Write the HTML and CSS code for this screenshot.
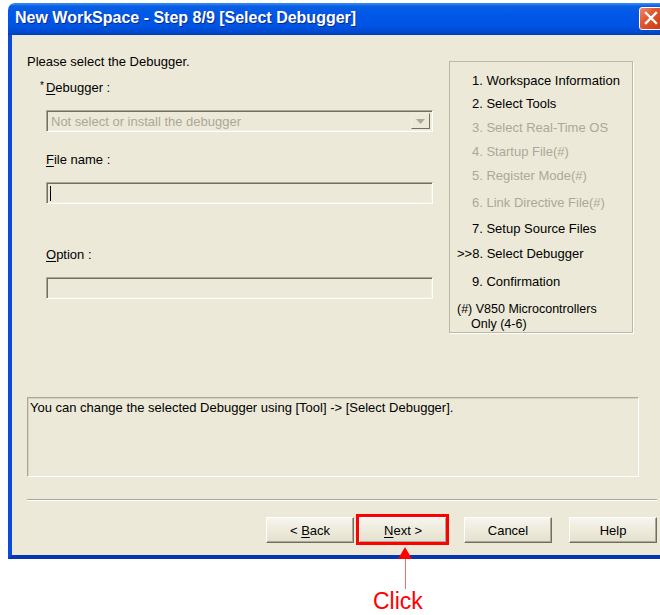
FILE: index.html
```html
<!DOCTYPE html>
<html lang="en">
<head>
<meta charset="utf-8">
<title>New WorkSpace - Step 8/9 [Select Debugger]</title>
<link rel="stylesheet" href="styles.css">
</head>
<body>
<div class="window">
  <div class="titlebar">
    <span class="title">New WorkSpace - Step 8/9 [Select Debugger]</span>
    <span class="close" aria-label="Close">
      <svg width="14" height="14" viewBox="0 0 14 14"><path d="M2 2 L12 12 M12 2 L2 12" stroke="#fff" stroke-width="2.4" stroke-linecap="square"/></svg>
    </span>
  </div>
  <div class="client">
    <div class="top">
      <div class="form">
        <p class="intro">Please select the Debugger.</p>
        <div class="label label-req"><span class="star">*</span><u>D</u>ebugger :</div>
        <div class="combo">
          <span class="combo-text">Not select or install the debugger</span>
          <span class="drop"><svg width="9" height="5" viewBox="0 0 9 5"><path d="M0 0 H9 L4.5 5 Z" fill="#ACA899"/></svg></span>
        </div>
        <div class="label label-file"><u>F</u>ile name :</div>
        <div class="field field-file"><span class="caret"></span></div>
        <div class="label label-opt"><u>O</u>ption :</div>
        <div class="field field-opt"></div>
      </div>
      <ul class="steps">
        <li class="step">1. Workspace Information</li>
        <li class="step">2. Select Tools</li>
        <li class="step off">3. Select Real-Time OS</li>
        <li class="step off">4. Startup File(#)</li>
        <li class="step off">5. Register Mode(#)</li>
        <li class="step off">6. Link Directive File(#)</li>
        <li class="step">7. Setup Source Files</li>
        <li class="step current">&gt;&gt;8. Select Debugger</li>
        <li class="step">9. Confirmation</li>
        <li class="note-steps">(#) V850 Microcontrollers<br><span class="indent">Only (4-6)</span></li>
      </ul>
    </div>
    <div class="hint">You can change the selected Debugger using [Tool] -&gt; [Select Debugger].</div>
    <div class="separator"></div>
    <div class="buttons">
      <button class="btn btn-back">&lt; <u>B</u>ack</button>
      <button class="btn btn-next"><u>N</u>ext &gt;
        <span class="callout">
          <span class="callout-box"></span>
          <span class="callout-arrow"></span>
          <span class="callout-stem"></span>
          <span class="callout-text">Click</span>
        </span>
      </button>
      <button class="btn btn-cancel">Cancel</button>
      <button class="btn btn-help">Help</button>
    </div>
  </div>
</div>
</body>
</html>
```
FILE: styles.css
```css
html, body {
  margin: 0;
  padding: 0;
  background: #ffffff;
}

body {
  padding: 3px 0 0 8px;
  width: 652px;
  height: 612px;
  overflow: hidden;
  font-family: "Liberation Sans", Arial, sans-serif;
  font-size: 13px;
  color: #000;
}

u {
  text-decoration: underline;
  text-underline-offset: 2px;
}

/* ---------- window frame ---------- */
.window {
  width: 660px;
}

.titlebar {
  height: 32px;
  display: flex;
  align-items: center;
  justify-content: space-between;
  padding: 0 6px 2px 7px;
  box-sizing: border-box;
  border-radius: 7px 7px 0 0;
  background: linear-gradient(#3d8ef7 0%, #0a5fe2 10%, #0058e8 35%, #0054e3 70%, #0049d0 92%, #003bb0 100%);
}

.title {
  color: #fff;
  font-weight: bold;
  font-size: 16px;
  text-shadow: 1px 1px 0 #0a2a8a;
}

.close {
  width: 23px;
  height: 23px;
  box-sizing: border-box;
  border: 1px solid #fff;
  border-radius: 3px;
  background: linear-gradient(135deg, #f08b6a 0%, #e2572f 40%, #cc3a14 100%);
  display: flex;
  align-items: center;
  justify-content: center;
}

.client {
  background: #ece9d8;
  border: 4px solid #0a4bd8;
  border-top: 0;
  border-bottom-color: #0637b3;
  padding-bottom: 12px;
}

/* ---------- upper area ---------- */
.top {
  display: flex;
  height: 298px;
}

.form {
  width: 422px;
  padding-left: 15px;
}

.intro {
  margin: 19px 0 0;
  line-height: 16px;
}

.label {
  line-height: 16px;
  padding-left: 19px;
}

.label-req {
  margin-top: 8px;
}

.star {
  font-size: 10px;
  vertical-align: 3px;
  margin-left: -6px;
  margin-right: 2px;
}

.label-file {
  margin-top: 20px;
}

.label-opt {
  margin-top: 43px;
}

.combo,
.field {
  margin-left: 19px;
  width: 387px;
  box-sizing: border-box;
  border: 1px solid;
  border-color: #aca899 #ffffff #ffffff #aca899;
  box-shadow: inset 1px 1px 0 #716f64, inset -1px -1px 0 #f1efe2;
  background: #ece9d8;
}

.combo {
  margin-top: 14px;
  height: 22px;
  display: flex;
  align-items: center;
  justify-content: space-between;
  padding: 0 2px 0 4px;
}

.combo-text {
  color: #aca899;
}

.drop {
  width: 19px;
  height: 16px;
  box-sizing: border-box;
  border: 1px solid;
  border-color: #f1efe2 #716f64 #716f64 #f1efe2;
  display: flex;
  align-items: center;
  justify-content: center;
}

.field {
  height: 22px;
  display: flex;
  align-items: center;
  padding-left: 3px;
}

.field-file {
  margin-top: 14px;
}

.field-opt {
  margin-top: 14px;
}

.caret {
  width: 1px;
  height: 15px;
  background: #000;
}

/* ---------- step list ---------- */
.steps {
  list-style: none;
  margin: 26px 0 0;
  padding: 6px 0 0 7px;
  width: 184px;
  height: 272px;
  box-sizing: border-box;
  border: 1px solid #bcb8a8;
  box-shadow: 1px 1px 0 #ffffff;
}

.step {
  display: flex;
  align-items: center;
  padding-left: 15px;
  white-space: nowrap;
}

/* row heights follow the uneven spacing of the wizard list */
.step:nth-child(1) { height: 24px; }
.step:nth-child(2) { height: 22px; }
.step:nth-child(3) { height: 26px; }
.step:nth-child(4) { height: 22px; }
.step:nth-child(5) { height: 26px; }
.step:nth-child(6) { height: 28px; }
.step:nth-child(7) { height: 24px; }
.step:nth-child(8) { height: 26px; }
.step:nth-child(9) { height: 30px; }

.step.off {
  color: #aca899;
}

.step.current {
  padding-left: 0;
}

.note-steps {
  margin-top: 6px;
  line-height: 15px;
  font-size: 12.5px;
  white-space: nowrap;
}

.indent {
  padding-left: 14px;
}

/* ---------- lower area ---------- */
.hint {
  margin: 64px 25px 0 15px;
  height: 80px;
  box-sizing: border-box;
  padding: 1px 2px;
  line-height: 17px;
  border: 1px solid;
  border-color: #aca899 #ffffff #ffffff #aca899;
  box-shadow: inset 1px 1px 0 #d6d3c4;
}

.separator {
  margin: 22px 7px 0 15px;
  height: 1px;
  background: #aca899;
  border-bottom: 1px solid #ffffff;
}

.buttons {
  display: flex;
  justify-content: flex-end;
  margin: 16px 7px 0 0;
}

.btn {
  position: relative;
  width: 88px;
  height: 26px;
  box-sizing: border-box;
  font-family: "Liberation Sans", Arial, sans-serif;
  font-size: 13px;
  color: #000;
  background: linear-gradient(#f6f5ef, #ece9d8 60%, #e3e0cf);
  border: 1px solid;
  border-color: #ffffff #716f64 #716f64 #ffffff;
  box-shadow: inset -1px -1px 0 #aca899;
  padding: 0;
}

.btn-next {
  margin-left: 5px;
}

.btn-cancel,
.btn-help {
  margin-left: 17px;
}

/* annotation over the Next button */
.callout {
  position: absolute;
  left: 0;
  top: 0;
  width: 100%;
  height: 100%;
}

.callout-box {
  position: absolute;
  left: -4px;
  top: -4px;
  right: -3px;
  bottom: -3px;
  border: 3px solid #ff0000;
}

.callout-arrow {
  position: absolute;
  left: 38px;
  top: 29px;
  width: 0;
  height: 0;
  border-left: 7px solid transparent;
  border-right: 7px solid transparent;
  border-bottom: 12px solid #ff0000;
}

.callout-stem {
  position: absolute;
  left: 45px;
  top: 41px;
  width: 1px;
  height: 30px;
  background: #f07070;
}

.callout-text {
  position: absolute;
  left: 13px;
  top: 72px;
  font-size: 23px;
  line-height: 23px;
  color: #ff0000;
  white-space: nowrap;
}
```
